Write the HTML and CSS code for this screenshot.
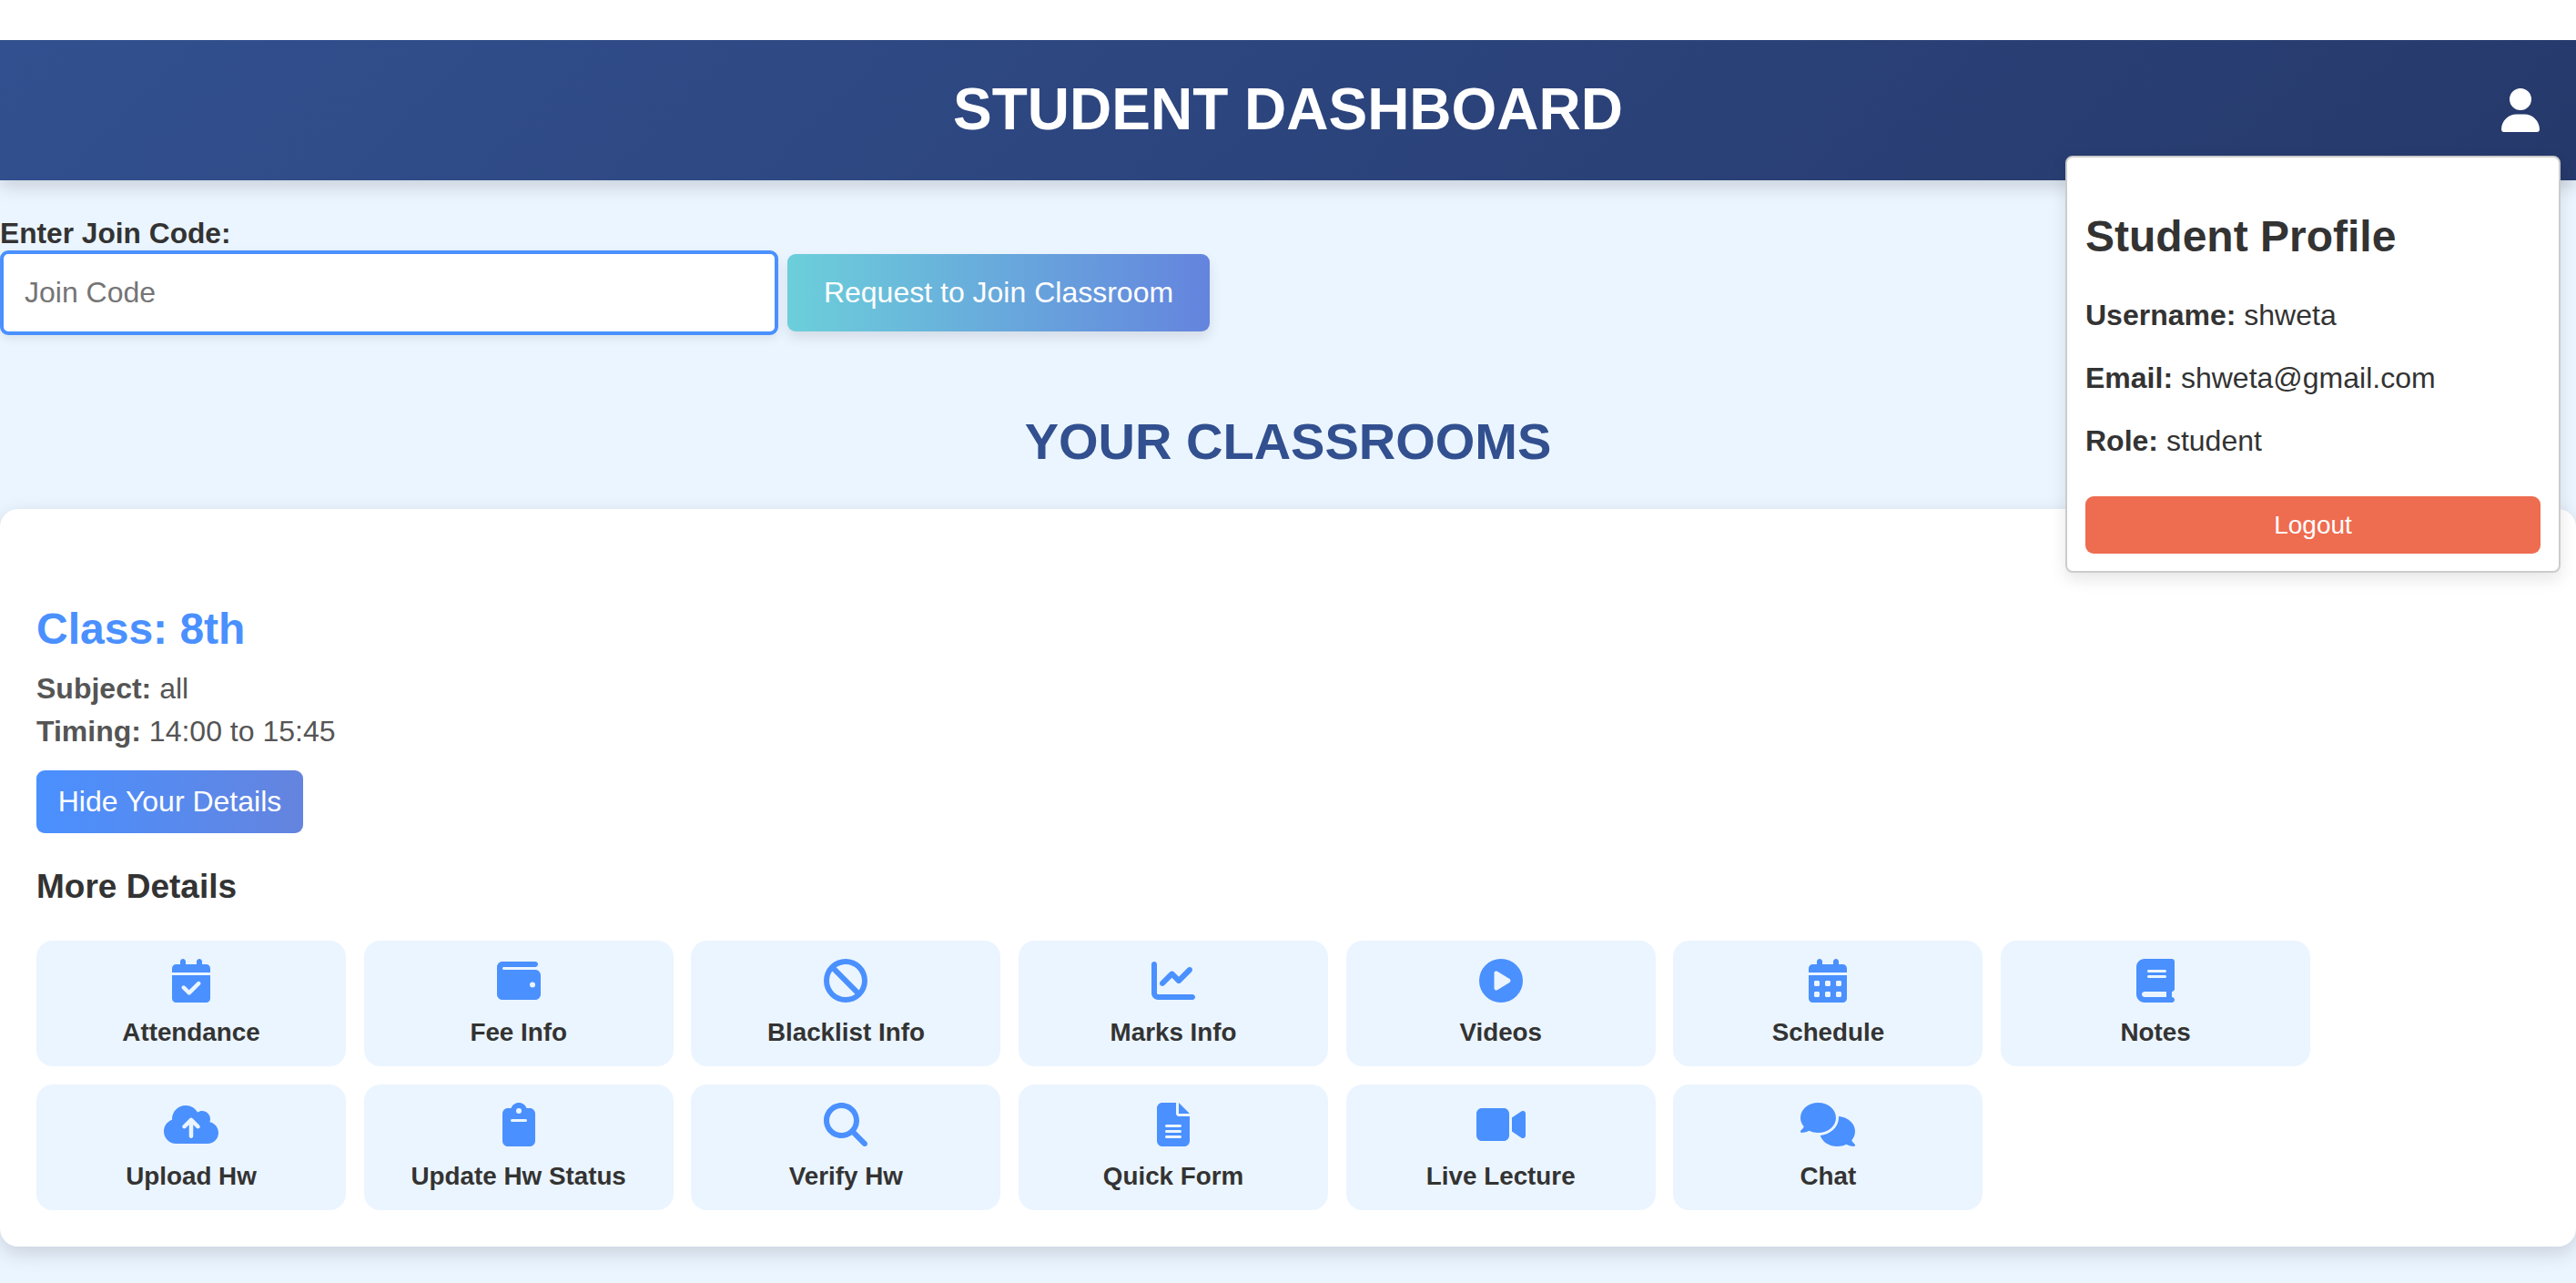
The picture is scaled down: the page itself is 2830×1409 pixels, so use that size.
FILE: index.html
```html
<!DOCTYPE html>
<html lang="en">

<head>
    <meta charset="UTF-8">
    <meta name="viewport" content="width=device-width, initial-scale=1.0">
    <title>Student Dashboard</title>
    <link rel="stylesheet" href="styles.css">
</head>

<body>
    <header class="topbar">
        <h1>STUDENT DASHBOARD</h1>
        <svg class="user-icon" viewBox="0 0 448 512"><path d="M224 256A128 128 0 1 0 224 0a128 128 0 1 0 0 256zm-45.7 48C79.8 304 0 383.8 0 482.3C0 498.7 13.3 512 29.7 512H418.3c16.4 0 29.7-13.3 29.7-29.7C448 383.8 368.2 304 269.7 304H178.3z"/></svg>
    </header>

    <!-- Profile popup, opened from the user icon -->
    <div class="profile">
        <h2>Student Profile</h2>
        <p><b>Username:</b> shweta</p>
        <p><b>Email:</b> shweta@gmail.com</p>
        <p><b>Role:</b> student</p>
        <button class="logout" type="button">Logout</button>
    </div>

    <form class="join">
        <label for="joinCode">Enter Join Code:</label>
        <div class="join-row">
            <input type="text" id="joinCode" placeholder="Join Code">
            <button class="join-btn" type="button">Request to Join Classroom</button>
        </div>
    </form>

    <h2 class="section-title">YOUR CLASSROOMS</h2>

    <section class="card">
        <h3 class="class-name">Class: 8th</h3>
        <p class="meta"><b>Subject:</b> all</p>
        <p class="meta"><b>Timing:</b> 14:00 to 15:45</p>
        <button class="details-btn" type="button">Hide Your Details</button>
        <h4 class="more">More Details</h4>

        <div class="tiles">
            <a class="tile">
                <svg viewBox="0 0 448 512"><path d="M128 0c17.7 0 32 14.3 32 32V64H288V32c0-17.7 14.3-32 32-32s32 14.3 32 32V64h48c26.5 0 48 21.5 48 48v48H0V112C0 85.5 21.5 64 48 64H96V32c0-17.7 14.3-32 32-32zM0 192H448V464c0 26.5-21.5 48-48 48H48c-26.5 0-48-21.5-48-48V192zM329 305c9.4-9.4 9.4-24.6 0-33.9s-24.6-9.4-33.9 0l-95 95-47-47c-9.4-9.4-24.6-9.4-33.9 0s-9.4 24.6 0 33.9l64 64c9.4 9.4 24.6 9.4 33.9 0L329 305z"/></svg>
                <span>Attendance</span>
            </a>
            <a class="tile">
                <svg viewBox="0 0 512 512"><path d="M64 32C28.7 32 0 60.7 0 96V416c0 35.3 28.7 64 64 64H448c35.3 0 64-28.7 64-64V192c0-35.3-28.7-64-64-64H80c-8.8 0-16-7.2-16-16s7.2-16 16-16H448c17.7 0 32-14.3 32-32s-14.3-32-32-32H64zM416 272a32 32 0 1 1 0 64 32 32 0 1 1 0-64z"/></svg>
                <span>Fee Info</span>
            </a>
            <a class="tile">
                <svg viewBox="0 0 512 512"><path d="M367.2 412.5L99.5 144.8C77.1 176.1 64 214.5 64 256c0 106 86 192 192 192c41.5 0 79.9-13.1 111.2-35.5zm45.3-45.3C434.9 335.9 448 297.5 448 256c0-106-86-192-192-192c-41.5 0-79.9 13.1-111.2 35.5L412.5 367.2zM0 256a256 256 0 1 1 512 0A256 256 0 1 1 0 256z"/></svg>
                <span>Blacklist Info</span>
            </a>
            <a class="tile">
                <svg viewBox="0 0 512 512"><path d="M64 64c0-17.7-14.3-32-32-32S0 46.3 0 64V400c0 44.2 35.8 80 80 80H480c17.7 0 32-14.3 32-32s-14.3-32-32-32H80c-8.8 0-16-7.2-16-16V64zm406.6 86.6c12.5-12.5 12.5-32.8 0-45.3s-32.8-12.5-45.3 0L320 210.7l-57.4-57.4c-12.5-12.5-32.8-12.5-45.3 0l-112 112c-12.5 12.5-12.5 32.8 0 45.3s32.8 12.5 45.3 0L240 221.3l57.4 57.4c12.5 12.5 32.8 12.5 45.3 0l128-128z"/></svg>
                <span>Marks Info</span>
            </a>
            <a class="tile">
                <svg viewBox="0 0 512 512"><path d="M0 256a256 256 0 1 1 512 0A256 256 0 1 1 0 256zM188.3 147.1c-7.6 4.2-12.3 12.3-12.3 20.9V344c0 8.7 4.7 16.7 12.3 20.9s16.8 4.1 24.3-.5l144-88c7.1-4.4 11.5-12.1 11.5-20.5s-4.4-16.1-11.5-20.5l-144-88c-7.4-4.5-16.7-4.7-24.3-.5z"/></svg>
                <span>Videos</span>
            </a>
            <a class="tile">
                <svg viewBox="0 0 448 512"><path d="M128 0c17.7 0 32 14.3 32 32V64H288V32c0-17.7 14.3-32 32-32s32 14.3 32 32V64h48c26.5 0 48 21.5 48 48v48H0V112C0 85.5 21.5 64 48 64H96V32c0-17.7 14.3-32 32-32zM0 192H448V464c0 26.5-21.5 48-48 48H48c-26.5 0-48-21.5-48-48V192zm64 80v32c0 8.8 7.2 16 16 16h32c8.8 0 16-7.2 16-16V272c0-8.8-7.2-16-16-16H80c-8.8 0-16 7.2-16 16zm128 0v32c0 8.8 7.2 16 16 16h32c8.8 0 16-7.2 16-16V272c0-8.8-7.2-16-16-16H208c-8.8 0-16 7.2-16 16zm144-16c-8.8 0-16 7.2-16 16v32c0 8.8 7.2 16 16 16h32c8.8 0 16-7.2 16-16V272c0-8.8-7.2-16-16-16H336zM64 400v32c0 8.8 7.2 16 16 16h32c8.8 0 16-7.2 16-16V400c0-8.8-7.2-16-16-16H80c-8.8 0-16 7.2-16 16zm144-16c-8.8 0-16 7.2-16 16v32c0 8.8 7.2 16 16 16h32c8.8 0 16-7.2 16-16V400c0-8.8-7.2-16-16-16H208zm112 16v32c0 8.8 7.2 16 16 16h32c8.8 0 16-7.2 16-16V400c0-8.8-7.2-16-16-16H336c-8.8 0-16 7.2-16 16z"/></svg>
                <span>Schedule</span>
            </a>
            <a class="tile">
                <svg viewBox="0 0 448 512"><path d="M96 0C43 0 0 43 0 96V416c0 53 43 96 96 96H384h32c17.7 0 32-14.3 32-32s-14.3-32-32-32V384c17.7 0 32-14.3 32-32V32c0-17.7-14.3-32-32-32H384 96zm0 384H352v64H96c-17.7 0-32-14.3-32-32s14.3-32 32-32zm32-240c0-8.8 7.2-16 16-16H336c8.8 0 16 7.2 16 16s-7.2 16-16 16H144c-8.8 0-16-7.2-16-16zm16 48H336c8.8 0 16 7.2 16 16s-7.2 16-16 16H144c-8.8 0-16-7.2-16-16s7.2-16 16-16z"/></svg>
                <span>Notes</span>
            </a>
            <a class="tile">
                <svg viewBox="0 0 640 512"><path d="M144 480C64.5 480 0 415.5 0 336c0-62.8 40.2-116.2 96.2-135.9c-.1-2.7-.2-5.4-.2-8.1c0-88.4 71.6-160 160-160c59.3 0 111 32.2 138.7 80.2C409.9 102 428.3 96 448 96c53 0 96 43 96 96c0 12.2-2.3 23.8-6.4 34.6C596 238.4 640 290.1 640 352c0 70.7-57.3 128-128 128H144zm79-217c-9.4 9.4-9.4 24.6 0 33.9s24.6 9.4 33.9 0l39-39V392c0 13.3 10.7 24 24 24s24-10.7 24-24V257.9l39 39c9.4 9.4 24.6 9.4 33.9 0s9.4-24.6 0-33.9l-80-80c-9.4-9.4-24.6-9.4-33.9 0l-80 80z"/></svg>
                <span>Upload Hw</span>
            </a>
            <a class="tile">
                <svg viewBox="0 0 384 512"><path d="M192 0c-41.8 0-77.4 26.7-90.5 64H64C28.7 64 0 92.7 0 128V448c0 35.3 28.7 64 64 64H320c35.3 0 64-28.7 64-64V128c0-35.3-28.7-64-64-64H282.5C269.4 26.7 233.8 0 192 0zm0 64a32 32 0 1 1 0 64 32 32 0 1 1 0-64zM112 192H272c8.8 0 16 7.2 16 16s-7.2 16-16 16H112c-8.8 0-16-7.2-16-16s7.2-16 16-16z"/></svg>
                <span>Update Hw Status</span>
            </a>
            <a class="tile">
                <svg viewBox="0 0 512 512"><path d="M416 208c0 45.9-14.9 88.3-40 122.7L502.6 457.4c12.5 12.5 12.5 32.8 0 45.3s-32.8 12.5-45.3 0L330.7 376c-34.4 25.2-76.8 40-122.7 40C93.1 416 0 322.9 0 208S93.1 0 208 0S416 93.1 416 208zM208 352a144 144 0 1 0 0-288 144 144 0 1 0 0 288z"/></svg>
                <span>Verify Hw</span>
            </a>
            <a class="tile">
                <svg viewBox="0 0 384 512"><path d="M64 0C28.7 0 0 28.7 0 64V448c0 35.3 28.7 64 64 64H320c35.3 0 64-28.7 64-64V160H256c-17.7 0-32-14.3-32-32V0H64zM256 0V128H384L256 0zM112 256H272c8.8 0 16 7.2 16 16s-7.2 16-16 16H112c-8.8 0-16-7.2-16-16s7.2-16 16-16zm0 64H272c8.8 0 16 7.2 16 16s-7.2 16-16 16H112c-8.8 0-16-7.2-16-16s7.2-16 16-16zm0 64H272c8.8 0 16 7.2 16 16s-7.2 16-16 16H112c-8.8 0-16-7.2-16-16s7.2-16 16-16z"/></svg>
                <span>Quick Form</span>
            </a>
            <a class="tile">
                <svg viewBox="0 0 576 512"><path d="M0 128C0 92.7 28.7 64 64 64H320c35.3 0 64 28.7 64 64V384c0 35.3-28.7 64-64 64H64c-35.3 0-64-28.7-64-64V128zM559.1 99.8c10.4 5.6 16.9 16.4 16.9 28.2V384c0 11.8-6.5 22.6-16.9 28.2s-23 5-32.9-1.6l-96-64L416 337.1V320 192 174.9l14.2-9.5 96-64c9.8-6.5 22.4-7.2 32.9-1.6z"/></svg>
                <span>Live Lecture</span>
            </a>
            <a class="tile">
                <svg viewBox="0 0 640 512"><path d="M208 352c114.9 0 208-78.8 208-176S322.9 0 208 0S0 78.8 0 176c0 38.6 14.7 74.3 39.6 103.4c-3.5 9.4-8.7 17.7-14.2 24.7c-4.8 6.2-9.7 11-13.3 14.3c-1.8 1.6-3.3 2.9-4.3 3.7c-.5 .4-.9 .7-1.1 .8l-.2 .2 0 0 0 0C1 327.2-1.4 334.4 .8 340.9S9.1 352 16 352c21.8 0 43.8-5.6 62.1-12.5c9.2-3.5 17.8-7.4 25.3-11.4C134.1 343.3 169.8 352 208 352zM448 176c0 112.3-99.1 196.9-216.5 207C255.8 457.7 336.1 512 432 512c38.2 0 73.9-8.7 104.7-23.9c7.5 4 16 7.9 25.2 11.4c18.3 6.9 40.3 12.5 62.1 12.5c6.9 0 13.1-4.5 15.2-11.1c2.1-6.6-.2-13.8-5.8-17.9l0 0 0 0-.2-.2c-.2-.2-.6-.4-1.1-.8c-1-.8-2.5-2-4.3-3.7c-3.6-3.3-8.5-8.1-13.3-14.3c-5.5-7-10.7-15.4-14.2-24.7c24.9-29 39.6-64.7 39.6-103.4c0-92.8-84.9-168.9-192.6-175.5c.4 5.1 .6 10.3 .6 15.5z"/></svg>
                <span>Chat</span>
            </a>
        </div>
    </section>
</body>

</html>
```

FILE: styles.css
```css
body {
    font-family: "Liberation Sans", Arial, sans-serif;
    margin: 0;
    min-height: 1409px;
    background-color: #ebf5ff;
    color: #333;
    overflow: hidden;
    position: relative;
}

.topbar {
    height: 151px;
    padding-bottom: 3px;
    border-top: 44px solid #fff;
    display: flex;
    align-items: center;
    justify-content: center;
    background-image: linear-gradient(135deg, #32508f, #26396b);
    box-shadow: 0 7px 18px rgba(0, 0, 0, 0.15);
    position: relative;
}

.topbar h1 {
    margin: 0;
    font-size: 64px;
    color: #fff;
}

.user-icon {
    position: absolute;
    right: 40px;
    top: 53px;
    width: 42px;
    height: 48px;
    fill: #fff;
}

.profile {
    position: absolute;
    left: 2269px;
    top: 171px;
    width: 544px;
    height: 458px;
    box-sizing: border-box;
    padding: 0 20px;
    background-color: #fff;
    border: 2px solid #ccc;
    border-radius: 8px;
    box-shadow: 0 7px 18px rgba(0, 0, 0, 0.1);
    z-index: 5;
}

.profile h2 {
    margin: 59px 0 41px;
    font-size: 48px;
    line-height: 55px;
}

.profile p {
    margin: 0 0 32px;
    font-size: 32px;
    line-height: 37px;
}

.logout {
    display: block;
    width: 500px;
    height: 63px;
    margin-top: 42px;
    border: none;
    border-radius: 9px;
    background-color: #ee6c50;
    color: #fff;
    font-family: inherit;
    font-size: 28px;
}

.join {
    margin-top: 40px;
}

.join label {
    display: block;
    font-size: 31.7px;
    font-weight: bold;
    line-height: 37px;
}

.join-row {
    display: flex;
    align-items: center;
    gap: 10px;
}

.join-row input {
    width: 855px;
    height: 93px;
    box-sizing: border-box;
    padding: 0 23px;
    border: 4px solid #4a90ff;
    border-radius: 9px;
    font-family: inherit;
    font-size: 32px;
    outline: none;
    box-shadow: 0 4px 11px rgba(0, 0, 0, 0.08);
}

.join-btn {
    width: 464px;
    height: 85px;
    border: none;
    border-radius: 9px;
    background-image: linear-gradient(90deg, #6ccfda, #6484de);
    color: #fff;
    font-family: inherit;
    font-size: 32px;
    box-shadow: 0 7px 14px rgba(0, 0, 0, 0.1);
}

.section-title {
    margin: 85px 0 42px;
    text-align: center;
    font-size: 56px;
    line-height: 64px;
    color: #32508f;
}

.card {
    height: 810px;
    box-sizing: border-box;
    padding: 104px 40px 0;
    background-color: #fff;
    border-radius: 20px;
    box-shadow: 0 7px 22px rgba(0, 0, 0, 0.15);
}

.class-name {
    margin: 0 0 20px;
    font-size: 48px;
    line-height: 55px;
    color: #4a90ff;
}

.meta {
    margin: 0 0 10px;
    font-size: 32px;
    line-height: 37px;
    color: #555;
}

.details-btn {
    display: block;
    width: 293px;
    height: 69px;
    margin-top: 24px;
    border: none;
    border-radius: 9px;
    background-image: linear-gradient(90deg, #4a90ff, #6484de);
    color: #fff;
    font-family: inherit;
    font-size: 32px;
}

.more {
    margin: 37px 0 38px;
    font-size: 37px;
    line-height: 43px;
}

.tiles {
    display: flex;
    flex-wrap: wrap;
    gap: 20px 19.7px;
}

.tile {
    width: 340px;
    height: 138px;
    box-sizing: border-box;
    padding-top: 20px;
    display: flex;
    flex-direction: column;
    align-items: center;
    background-color: #ebf5ff;
    border-radius: 18px;
    font-size: 27.8px;
    font-weight: bold;
}

.tile svg {
    height: 48px;
    fill: #4a90ff;
}

.tile span {
    margin-top: 16px;
    line-height: 33px;
}
```
